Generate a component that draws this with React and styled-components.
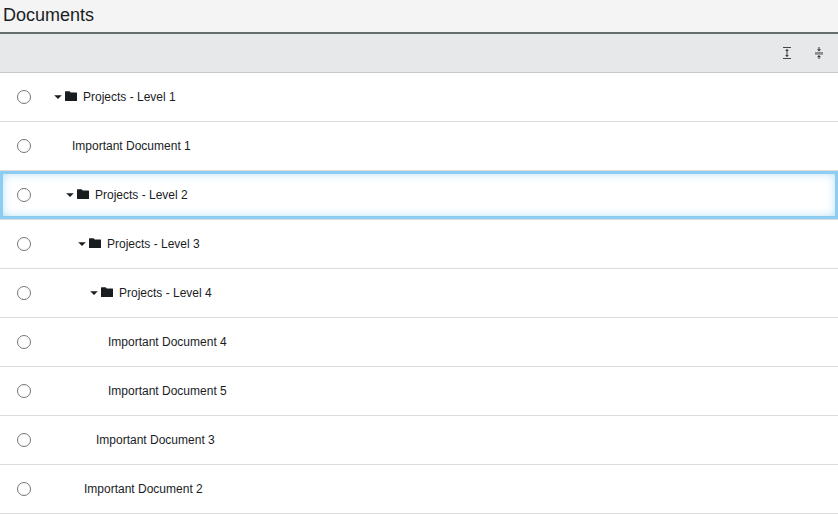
import React from "react";
import styled, { createGlobalStyle, css } from "styled-components";

const GlobalStyle = createGlobalStyle`
  body {
    margin: 0;
    background: #fff;
    color: #1a1d1f;
    font-family: "Liberation Sans", Arial, sans-serif;
    font-size: 12px;
  }
  svg { display: block; }
`;

const Panel = styled.main`
  display: flex;
  flex-direction: column;
  height: 514px;
  overflow: hidden;
`;

const Header = styled.header`
  box-sizing: border-box;
  height: 34px;
  padding: 0 3px;
  border-bottom: 2px solid #666b6d;
  background: #f4f4f4;
`;

const Title = styled.h1`
  margin: 0;
  font-size: 18px;
  font-weight: 400;
  line-height: 31px;
`;

const Toolbar = styled.div`
  box-sizing: border-box;
  display: flex;
  align-items: center;
  justify-content: flex-end;
  gap: 16px;
  height: 39px;
  padding-right: 11px;
  border-bottom: 1px solid #c5c7c8;
  background: #e7e8ea;
`;

const ToolButton = styled.button`
  width: 16px;
  height: 16px;
  padding: 0;
  border: 0;
  background: none;
  color: #1a1d1f;
`;

const Tree = styled.div`
  flex: none;
`;

const Row = styled.div`
  box-sizing: border-box;
  display: flex;
  align-items: center;
  height: 49px;
  padding-left: 17px;
  border-bottom: 1px solid #dcdcdc;
  ${(p) =>
    p.$focused &&
    css`
      box-shadow: inset 0 0 0 3px #8dcdf1, inset 0 0 12px #8dcdf1;
    `}
`;

const Radio = styled.span`
  box-sizing: border-box;
  width: 14px;
  height: 14px;
  border: 1px solid #767676;
  border-radius: 50%;
  background: #fff;
`;

const Label = styled.span`
  display: flex;
  align-items: center;
  margin-left: ${(p) => p.$indent}px;
  line-height: 14px;
  white-space: pre;
`;

const FolderMark = styled.span`
  display: flex;
  align-items: center;
  gap: 3px;
  margin-right: 6px;
`;

const ExpandIcon = () => (
  <svg width="16" height="16" viewBox="0 0 16 16" fill="currentColor">
    <path fillOpacity="0.8" d="M4 2h8v1H4zM4 13h8v1H4z" />
    <path fillOpacity="0.4" d="M7 6h2v4H7z" />
    <path fillOpacity="0.85" d="M8 3.7L9.8 6H6.2zM8 12.3L9.8 10H6.2z" />
  </svg>
);

const CollapseIcon = () => (
  <svg width="16" height="16" viewBox="0 0 16 16" fill="currentColor">
    <path fillOpacity="0.45" d="M4 6.9h8v2.8H4zM7 2h2v2H7zM7 12.5h2v1.5H7z" />
    <path fillOpacity="0.9" d="M8 6.4L10 4.2H6zM8 10.1L10 12.3H6z" />
  </svg>
);

const FolderIcon = () => (
  <>
    <svg width="8" height="14" viewBox="0 0 8 14" fill="#1a1d1f">
      <path d="M.2 5.3h7.6L4 9z" />
    </svg>
    <svg width="12" height="14" viewBox="0 0 12 14" fill="#1a1d1f">
      <path d="M.5 1.2H4.5L5.8 2.6H11.5Q12 2.6 12 3.1V10.6Q12 11.1 11.5 11.1H.5Q0 11.1 0 10.6V1.7Q0 1.2 .5 1.2z" />
    </svg>
  </>
);

const rows = [
  { text: "Projects - Level 1", indent: 23, folder: true },
  { text: "Important Document 1", indent: 41 },
  { text: "Projects - Level 2", indent: 35, folder: true, focused: true },
  { text: "Projects - Level 3", indent: 47, folder: true },
  { text: "Projects - Level 4", indent: 59, folder: true },
  { text: "Important Document 4", indent: 77 },
  { text: "Important Document 5", indent: 77 },
  { text: "Important Document 3", indent: 65 },
  { text: "Important Document 2", indent: 53 },
];

export default function App() {
  return (
    <>
      <GlobalStyle />
      <Panel>
        <Header>
          <Title>Documents</Title>
        </Header>
        <Toolbar>
          <ToolButton aria-label="Expand all">
            <ExpandIcon />
          </ToolButton>
          <ToolButton aria-label="Collapse all">
            <CollapseIcon />
          </ToolButton>
        </Toolbar>
        <Tree role="tree">
          {rows.map((row) => (
            <Row key={row.text} role="treeitem" $focused={row.focused}>
              <Radio />
              <Label $indent={row.indent}>
                {row.folder && (
                  <FolderMark>
                    <FolderIcon />
                  </FolderMark>
                )}
                {row.text}
              </Label>
            </Row>
          ))}
        </Tree>
      </Panel>
    </>
  );
}
